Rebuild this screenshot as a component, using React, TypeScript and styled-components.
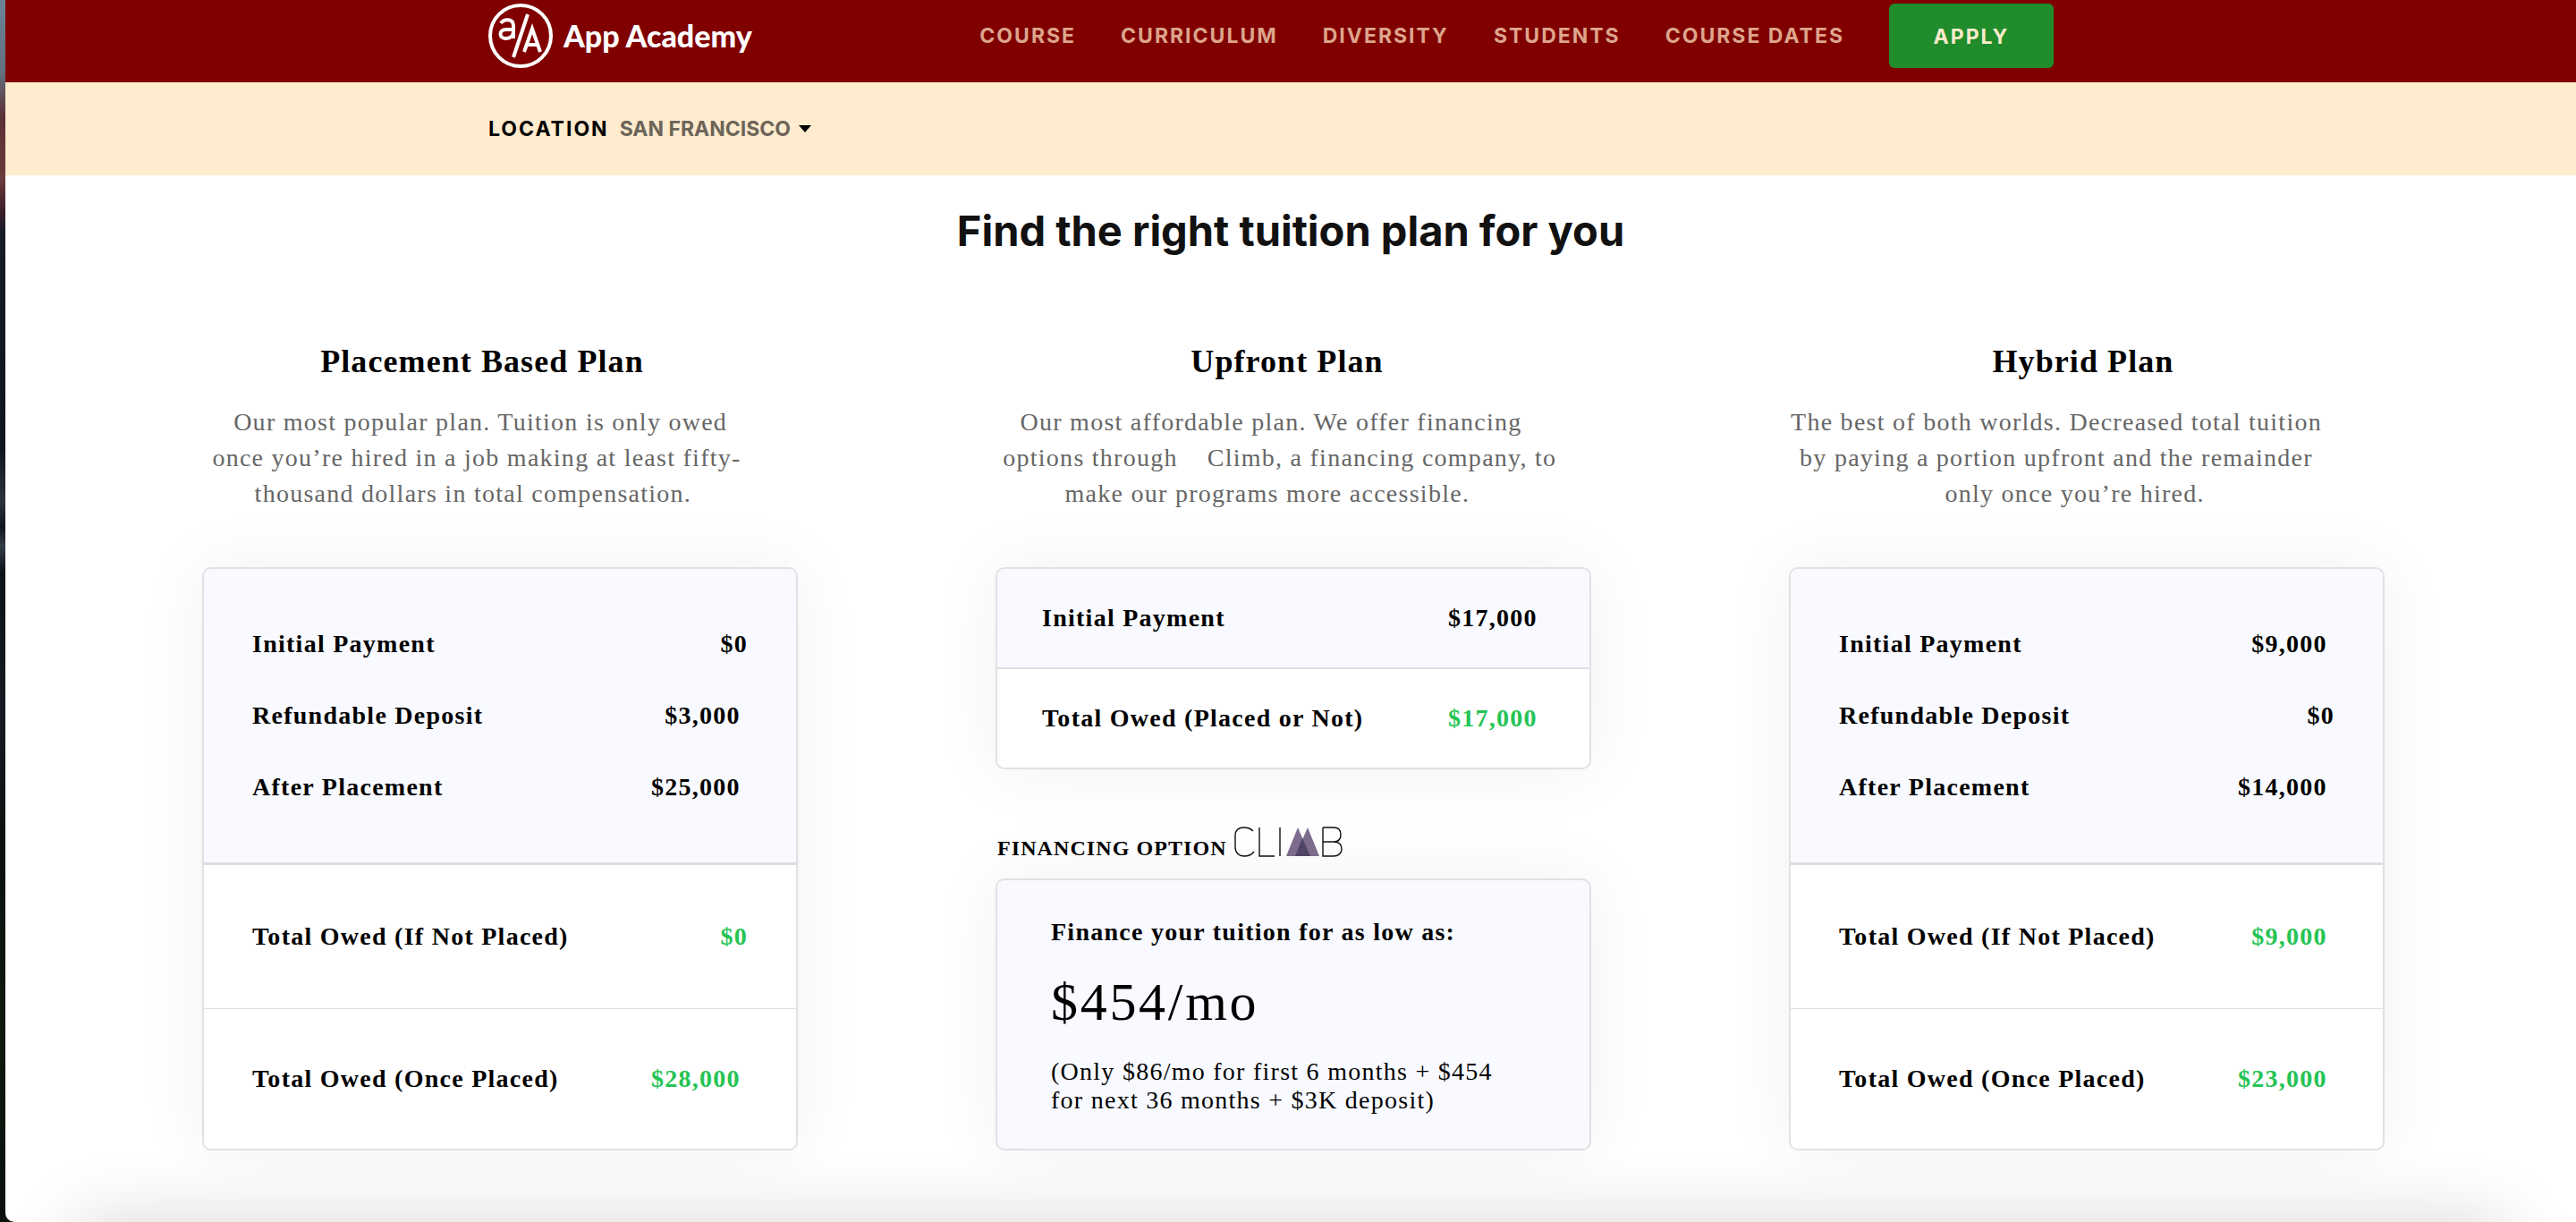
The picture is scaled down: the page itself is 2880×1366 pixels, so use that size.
import React from "react";
import styled, { createGlobalStyle } from "styled-components";

const GlobalStyle = createGlobalStyle`
  *, *::before, *::after { box-sizing: border-box; }
  body {
    margin: 0;
    background: linear-gradient(to bottom, #6b8296 0, #64707f 80px, #5a3036 130px, #6b3a3a 200px, #3c1f2a 236px, #171b27 260px, #10141d 500px, #2c3340 560px, #10151c 590px, #343c4a 610px, #0d1318 640px, #171a22 800px, #0c1110 940px, #10190f 1150px, #0b100f 1366px);
    color: #000;
  }
  h1, h2, p, dl, dd, dt { margin: 0; }
`;

const sans = `"Inter", "Liberation Sans", sans-serif`;
const serif = `"Liberation Serif", "Times New Roman", serif`;

const Page = styled.div`
  display: flex;
  flex-direction: column;
  min-height: 100vh;
  margin-left: 6px;
  background: #fff;
  border-bottom-left-radius: 10px;
  overflow: hidden;
  font-family: ${serif};
`;

const Header = styled.header`
  display: flex;
  justify-content: space-between;
  align-items: flex-start;
  height: 92px;
  padding: 4px 584px 0 540px;
  background: #800000;
`;

const Brand = styled.a`
  display: flex;
  align-items: center;
  gap: 12px;
  color: #fff;
  font: 900 34px/72px "Lato", sans-serif;
  text-decoration: none;
`;

const Nav = styled.nav`
  display: flex;
  align-items: center;
  gap: 50px;
`;

const NavLink = styled.a`
  color: #dda58c;
  font: 700 23px/72px ${sans};
  letter-spacing: 2px;
  text-decoration: none;
`;

const ApplyButton = styled.button`
  width: 184px;
  height: 72px;
  border: 0;
  border-radius: 6px;
  background: #208c2b;
  color: #ffebcd;
  font: 700 23px/72px ${sans};
  letter-spacing: 2px;
`;

const LocationBar = styled.div`
  display: flex;
  align-items: center;
  gap: 12px;
  height: 104px;
  padding-left: 540px;
  background: #ffebcd;
  font: 700 23px/32px ${sans};
`;

const LocationLabel = styled.label`
  letter-spacing: 2px;
`;

const Picker = styled.span`
  display: flex;
  align-items: center;
  gap: 8px;
`;

const LocationSelect = styled.select`
  appearance: none;
  padding: 0;
  border: 0;
  background: transparent;
  color: #6c6459;
  font: inherit;
`;

const Title = styled.h1`
  margin-top: 32px;
  color: #111;
  font: 700 47px/60px ${sans};
  text-align: center;
`;

const Plans = styled.main`
  display: grid;
  grid-template-columns: repeat(3, 666px);
  justify-content: space-between;
  align-items: start;
  padding: 92px 214px 0 220px;
`;

const Plan = styled.section`
  display: flex;
  flex-direction: column;
`;

const PlanName = styled.h2<{ $inset: number }>`
  padding-right: ${(p) => p.$inset}px;
  font: 700 36px/48px ${serif};
  letter-spacing: 0.03em;
  text-align: center;
`;

const PlanText = styled.p<{ $inset: number }>`
  margin-top: 24px;
  padding-right: ${(p) => p.$inset}px;
  color: #666;
  font: 400 28px/40px ${serif};
  letter-spacing: 0.045em;
  text-align: center;
  white-space: pre;
`;

const Card = styled.dl`
  margin-top: 62px;
  border: 2px solid #e0e1e4;
  border-radius: 10px;
  background: #fff;
  box-shadow: 0 0 80px rgba(0, 0, 0, 0.06);
  overflow: hidden;
`;

const Group = styled.div<{ $tint?: boolean; $pad: number; $line?: number; $side: number }>`
  padding: ${(p) => p.$pad}px ${(p) => p.$side}px;
  border-bottom: ${(p) => p.$line ?? 0}px solid #dddee1;
  background: ${(p) => (p.$tint ? "#f9faff" : "#fff")};
`;

const Row = styled.div`
  display: flex;
  justify-content: space-between;
  align-items: center;
  height: 80px;
  font: 700 28px/40px ${serif};
  letter-spacing: 0.045em;
`;

const Amount = styled.dd<{ $total?: boolean }>`
  color: ${(p) => (p.$total ? "#25c454" : "#000")};
`;

const Financing = styled.div`
  display: flex;
  align-items: flex-end;
  gap: 8px;
  margin-top: 64px;
  padding-left: 2px;
  font: 700 24px/20px ${serif};
  letter-spacing: 0.045em;
`;

const FinanceCard = styled.div`
  margin-top: 24px;
  padding: 38px 60px;
  border: 2px solid #e0e1e4;
  border-radius: 10px;
  background: #f9faff;
  box-shadow: 0 0 80px rgba(0, 0, 0, 0.06);
  font: 400 28px/32px ${serif};
  letter-spacing: 0.045em;
`;

const Lead = styled.p`
  font-weight: 700;
  line-height: 40px;
`;

const Rate = styled.p`
  margin: 20px 0 24px;
  font-size: 60px;
  line-height: 76px;
  letter-spacing: 0.045em;
`;

const Note = styled.p`
  white-space: pre-line;
`;

const NextSection = styled.div`
  height: 160px;
  margin: auto 80px -160px;
  box-shadow: 0 0 80px rgba(0, 0, 0, 0.16);
`;

function BrandMark() {
  return (
    <svg width="72" height="72" viewBox="0 0 72 72" fill="none" stroke="#fff" aria-hidden="true">
      <circle cx="36" cy="36" r="34" strokeWidth="4" />
      <path d="M44 12 28 60" strokeWidth="4" />
      <path d="M14 22c3-5 14-6 14 3v14M28 29h-8c-9 0-8 10-1 10 5 0 9-3 9-8" strokeWidth="4" />
      <path d="m40 54 9-26 9 26M43 46h12" strokeWidth="4" />
    </svg>
  );
}

function ClimbMark() {
  return (
    <svg width="121" height="34" viewBox="0 0 121 34" fill="none" stroke="#111" strokeWidth="1.4" role="img" aria-label="Climb">
      <path d="M21 5C18 2 15 1 11 1 4 1 1 5 1 10v13c0 6 4 10 10 10 4 0 8-1 11-5" />
      <path d="M28 1v32h17M51 1v32" />
      <path d="M99 1v32h12c5 0 9-3 9-8 0-6-4-8-9-8H99M111 17c5 0 8-3 8-8s-3-8-8-8H99" />
      <g stroke="none">
        <path d="M71 1 58 33h27zM82 1 68 33h27z" fill="#7e6d8d" />
        <path d="M76 13 68 33h17z" fill="#524668" />
      </g>
    </svg>
  );
}

type Line = [string, string];

function Rows({ items, total }: { items: Line[]; total?: boolean }) {
  return (
    <>
      {items.map(([label, amount]) => (
        <Row key={label}>
          <dt>{label}</dt>
          <Amount $total={total}>{amount}</Amount>
        </Row>
      ))}
    </>
  );
}

function PlacedCard({ parts, owed, placed }: { parts: Line[]; owed: string; placed: string }) {
  return (
    <Card>
      <Group $tint $pad={44} $side={54} $line={3}>
        <Rows items={parts} />
      </Group>
      <Group $pad={40} $side={54} $line={1}>
        <Rows total items={[["Total Owed (If Not Placed)", owed]]} />
      </Group>
      <Group $pad={38} $side={54}>
        <Rows total items={[["Total Owed (Once Placed)", placed]]} />
      </Group>
    </Card>
  );
}

const links = ["COURSE", "CURRICULUM", "DIVERSITY", "STUDENTS", "COURSE DATES"];

export default function App() {
  return (
    <>
      <GlobalStyle />
      <Page>
        <Header>
          <Brand href="#">
            <BrandMark />
            App Academy
          </Brand>
          <Nav>
            {links.map((name) => (
              <NavLink key={name} href="#">
                {name}
              </NavLink>
            ))}
            <ApplyButton type="button">APPLY</ApplyButton>
          </Nav>
        </Header>
        <LocationBar>
          <LocationLabel htmlFor="location">LOCATION</LocationLabel>
          <Picker>
            <LocationSelect id="location">
              <option>SAN FRANCISCO</option>
            </LocationSelect>
            <svg width="14" height="8" viewBox="0 0 14 8" aria-hidden="true">
              <path d="M0 0h14L7 8z" />
            </svg>
          </Picker>
        </LocationBar>
        <Title>Find the right tuition plan for you</Title>
        <Plans>
          <Plan>
            <PlanName $inset={40}>Placement Based Plan</PlanName>
            <PlanText $inset={52}>
              {"\u00a0Our most popular plan. Tuition is only owed\nonce you’re hired in a job making at least fifty-\nthousand dollars in total compensation.\u00a0"}
            </PlanText>
            <PlacedCard
              parts={[
                ["Initial Payment", "$0"],
                ["Refundable Deposit", "$3,000\u00a0"],
                ["After Placement", "$25,000\u00a0"],
              ]}
              owed="$0"
              placed={"$28,000\u00a0"}
            />
          </Plan>
          <Plan>
            <PlanName $inset={14}>Upfront Plan</PlanName>
            <PlanText $inset={50}>
              {"Our most affordable plan. We offer financing\n\u00a0options through \u00a0\u00a0 Climb, a financing company, to\nmake our programs more accessible.\u00a0"}
            </PlanText>
            <Card>
              <Group $tint $pad={15} $side={50} $line={2}>
                <Rows items={[["Initial Payment", "$17,000\u00a0"]]} />
              </Group>
              <Group $pad={15} $side={50}>
                <Rows total items={[["Total Owed (Placed or Not)", "$17,000\u00a0"]]} />
              </Group>
            </Card>
            <Financing>
              FINANCING OPTION
              <ClimbMark />
            </Financing>
            <FinanceCard>
              <Lead>Finance your tuition for as low as:</Lead>
              <Rate>$454/mo</Rate>
              <Note>{"(Only $86/mo for first 6 months + $454\nfor next 36 months + $3K deposit)"}</Note>
            </FinanceCard>
          </Plan>
          <Plan>
            <PlanName $inset={8}>Hybrid Plan</PlanName>
            <PlanText $inset={68}>
              {"The best of both worlds. Decreased total tuition\nby paying a portion upfront and the remainder\n\u00a0\u00a0\u00a0\u00a0\u00a0only once you’re hired."}
            </PlanText>
            <PlacedCard
              parts={[
                ["Initial Payment", "$9,000\u00a0"],
                ["Refundable Deposit", "$0"],
                ["After Placement", "$14,000\u00a0"],
              ]}
              owed={"$9,000\u00a0"}
              placed={"$23,000\u00a0"}
            />
          </Plan>
        </Plans>
        <NextSection />
      </Page>
    </>
  );
}
